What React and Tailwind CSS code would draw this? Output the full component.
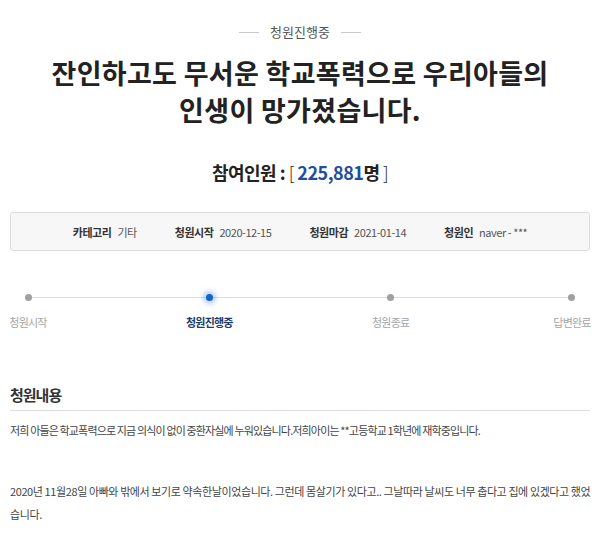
import React from 'react';

const steps = [
  { label: '청원시작', active: false },
  { label: '청원진행중', active: true },
  { label: '청원종료', active: false },
  { label: '답변완료', active: false },
];

const info = [
  ['카테고리', '기타'],
  ['청원시작', '2020-12-15'],
  ['청원마감', '2021-01-14'],
  ['청원인', 'naver - ***'],
];

export default function App() {
  return (
    <div className="h-[534px] w-[600px] overflow-hidden bg-white font-['Noto_Sans_CJK_KR',sans-serif] text-[#333]">
      <div className="mt-[23px] flex h-[18px] items-center justify-center gap-[11px]">
        <span className="h-px w-[20px] bg-[#c8c8c8]" />
        <span className="text-[13px] leading-[18px] text-[#555]">청원진행중</span>
        <span className="h-px w-[20px] bg-[#c8c8c8]" />
      </div>

      <h1 className="mt-[12px] text-center text-[27px] font-bold leading-[39px] tracking-[0.3px] text-[#222]">
        <span className="block">잔인하고도 무서운 학교폭력으로 우리아들의</span>
        <span className="-mt-[2px] block">인생이 망가졌습니다.</span>
      </h1>

      <p className="mt-[31px] text-center text-[18px] leading-[24px] tracking-[-0.5px] text-[#222]">
        <span className="font-bold">참여인원 : </span>
        <span className="font-light">[ </span>
        <span className="font-bold text-[#1d4f9e]">225,881</span>
        <span className="font-bold">명</span>
        <span className="font-light"> ]</span>
      </p>

      <div className="mx-[10px] mt-[28px] flex h-[39px] items-center justify-center gap-[38px] rounded-[3px] border border-[#dcdcdc] bg-[#f7f7f7] text-[11px] leading-[16px] tracking-[-0.45px]">
        {info.map(([label, value]) => (
          <div key={label} className="flex items-center gap-[6px]">
            <span className="font-bold text-[#333]">{label}</span>
            <span className="text-[#555]">{value}</span>
          </div>
        ))}
      </div>

      <div className="relative mx-[10px] mt-[43px] flex justify-between">
        <span className="absolute left-[18px] right-[18px] top-[3px] h-px bg-[#dcdcdc]" />
        {steps.map((step) => (
          <div key={step.label} className="relative flex w-[36px] flex-col items-center">
            {step.active ? (
              <span className="h-[7px] w-[7px] rounded-full bg-[#1565c8] shadow-[0_0_5px_3px_rgba(40,120,230,0.35)]" />
            ) : (
              <span className="h-[7px] w-[7px] rounded-full bg-[#a0a0a0]" />
            )}
            <span
              className={
                step.active
                  ? 'mt-[13px] whitespace-nowrap text-[11px] font-bold leading-[16px] tracking-[-0.8px] text-[#1e3d6b]'
                  : 'mt-[13px] whitespace-nowrap text-[11px] leading-[16px] tracking-[-0.8px] text-[#a5a5a5]'
              }
            >
              {step.label}
            </span>
          </div>
        ))}
      </div>

      <div className="mx-[10px] mt-[54px]">
        <h2 className="text-[15px] font-bold leading-[22px] tracking-[-1px] text-[#333]">청원내용</h2>
        <div className="mt-[4px] h-px bg-[#dedede]" />
        <div className="text-[11px] leading-[23px] text-[#444]">
          <p className="mt-[8px] tracking-[-0.85px]">
            저희 아들은 학교폭력으로 지금 의식이 없이 중환자실에 누워있습니다.저희아이는 **고등학교 1학년에 재학중입니다.
          </p>
          <p className="mt-[38px] tracking-[-0.4px]">
            <span className="whitespace-nowrap">
              2020년 11월28일 아빠와 밖에서 보기로 약속한날이었습니다. 그런데 몸살기가 있다고.. 그날따라 날씨도 너무 춥다고 집에 있겠다고 했었
            </span>
            <br />
            습니다.
          </p>
        </div>
      </div>
    </div>
  );
}
